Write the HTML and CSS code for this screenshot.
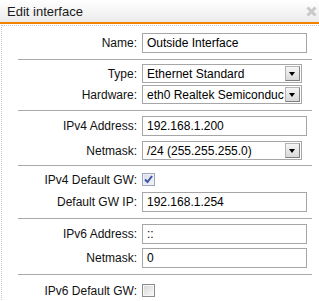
FILE: index.html
```html
<!DOCTYPE html>
<html lang="en">

<head>
  <meta charset="UTF-8" />
  <title>Edit interface</title>
  <link rel="stylesheet" href="styles.css">
</head>

<body>
  <div class="dialog">
    <div class="titlebar">
      <span class="title">Edit interface</span>
      <svg class="close" width="11" height="11" viewBox="0 0 11 11">
        <path d="M1.5 1.5 L9.5 9.5 M9.5 1.5 L1.5 9.5" stroke="#c9c9c9" stroke-width="3" fill="none" />
      </svg>
    </div>

    <div class="content">
      <div class="group g-first">
        <div class="row">
          <label class="lbl">Name:</label>
          <input class="text" type="text" value="Outside Interface">
        </div>
      </div>

      <div class="group g-hw">
        <div class="row">
          <label class="lbl">Type:</label>
          <div class="select"><span class="val">Ethernet Standard</span><span class="arrow"></span></div>
        </div>
        <div class="row">
          <label class="lbl">Hardware:</label>
          <div class="select"><span class="val">eth0 Realtek Semiconductor</span><span class="arrow"></span></div>
        </div>
      </div>

      <div class="group g-v4">
        <div class="row">
          <label class="lbl">IPv4 Address:</label>
          <input class="text" type="text" value="192.168.1.200">
        </div>
        <div class="row">
          <label class="lbl">Netmask:</label>
          <div class="select"><span class="val">/24 (255.255.255.0)</span><span class="arrow"></span></div>
        </div>
      </div>

      <div class="group">
        <div class="row row-chk">
          <label class="lbl">IPv4 Default GW:</label>
          <span class="check checked">
            <svg width="11" height="11" viewBox="0 0 11 11">
              <path d="M2 5.5 L4.5 8 L9 2" stroke="#3d54a4" stroke-width="2" fill="none" />
            </svg>
          </span>
        </div>
        <div class="row">
          <label class="lbl">Default GW IP:</label>
          <input class="text" type="text" value="192.168.1.254">
        </div>
      </div>

      <div class="group">
        <div class="row">
          <label class="lbl">IPv6 Address:</label>
          <input class="text" type="text" value="::">
        </div>
        <div class="row">
          <label class="lbl">Netmask:</label>
          <input class="text" type="text" value="0">
        </div>
      </div>

      <div class="group g-last">
        <div class="row row-chk">
          <label class="lbl">IPv6 Default GW:</label>
          <span class="check"></span>
        </div>
      </div>
    </div>
  </div>
</body>

</html>
```

FILE: styles.css
```css
body {
  margin: 0;
  padding: 0;
  background: #fff;
  font-family: "Liberation Sans", Arial, sans-serif;
  color: #111;
}

.dialog {
  width: 319px;
  height: 301px;
  overflow: hidden;
}

.titlebar {
  height: 22px;
  display: flex;
  align-items: center;
  justify-content: space-between;
  padding: 0 2px 0 7px;
  background: linear-gradient(#ffffff, #ebebeb);
  border-bottom: 2px solid #ef8200;
}

.title {
  font-size: 13px;
  color: #1a1a1a;
}

.content {
  margin: 1px 0 0 1px;
  border-top: 1px dotted #c8c8c8;
  border-left: 1px dotted #c8c8c8;
  height: 300px;
}

.group {
  display: flex;
  flex-direction: column;
  gap: 4px;
  margin: 0 7px 0 16px;
  padding: 5px 0 6px;
  border-top: 1px solid #aaaaaa;
}

.g-first {
  border-top: 0;
  padding-top: 7px;
}

.g-hw {
  padding-top: 4px;
  gap: 2px;
}

.g-v4 {
  gap: 5px;
  padding-bottom: 5px;
}

.g-last {
  padding-top: 7px;
}

.row {
  display: flex;
  align-items: center;
  font-size: 12px;
}

.row-chk {
  height: 17px;
}

.lbl {
  width: 119px;
  margin-right: 5px;
  text-align: right;
  white-space: nowrap;
}

.text {
  box-sizing: border-box;
  width: 165px;
  height: 20px;
  margin: 0;
  padding: 0 4px;
  border: 1px solid #a6a6a6;
  font-family: "Liberation Sans", Arial, sans-serif;
  font-size: 12px;
  color: #000;
  outline: none;
}

.select {
  box-sizing: border-box;
  width: 160px;
  height: 19px;
  display: flex;
  align-items: center;
  border: 1px solid #a6a6a6;
  background: #fff;
}

.val {
  flex: 1;
  padding-left: 4px;
  overflow: hidden;
  white-space: nowrap;
  color: #000;
}

.arrow {
  position: relative;
  box-sizing: border-box;
  width: 15px;
  height: 15px;
  margin: 0 1px;
  border: 1px solid #8d8d8d;
  border-color: #b4b4b4 #7e7e7e #7e7e7e #b4b4b4;
  background: linear-gradient(#f5f5f5, #d9d9d9);
}

.arrow::after {
  content: "";
  position: absolute;
  left: 3px;
  top: 5px;
  border-left: 3.5px solid transparent;
  border-right: 3.5px solid transparent;
  border-top: 4px solid #000;
}

.check {
  box-sizing: border-box;
  width: 13px;
  height: 13px;
  display: flex;
  align-items: center;
  justify-content: center;
  border: 1px solid #8c8c8c;
  box-shadow: inset 0 0 0 1px #f6f6f6;
  background: linear-gradient(135deg, #d6d6d6, #fbfbfb);
}

.checked {
  border-color: #9ea6bb;
  box-shadow: inset 0 0 0 1px #eef0f5;
  background: linear-gradient(135deg, #d9dde8, #f3f4f8);
}
```
